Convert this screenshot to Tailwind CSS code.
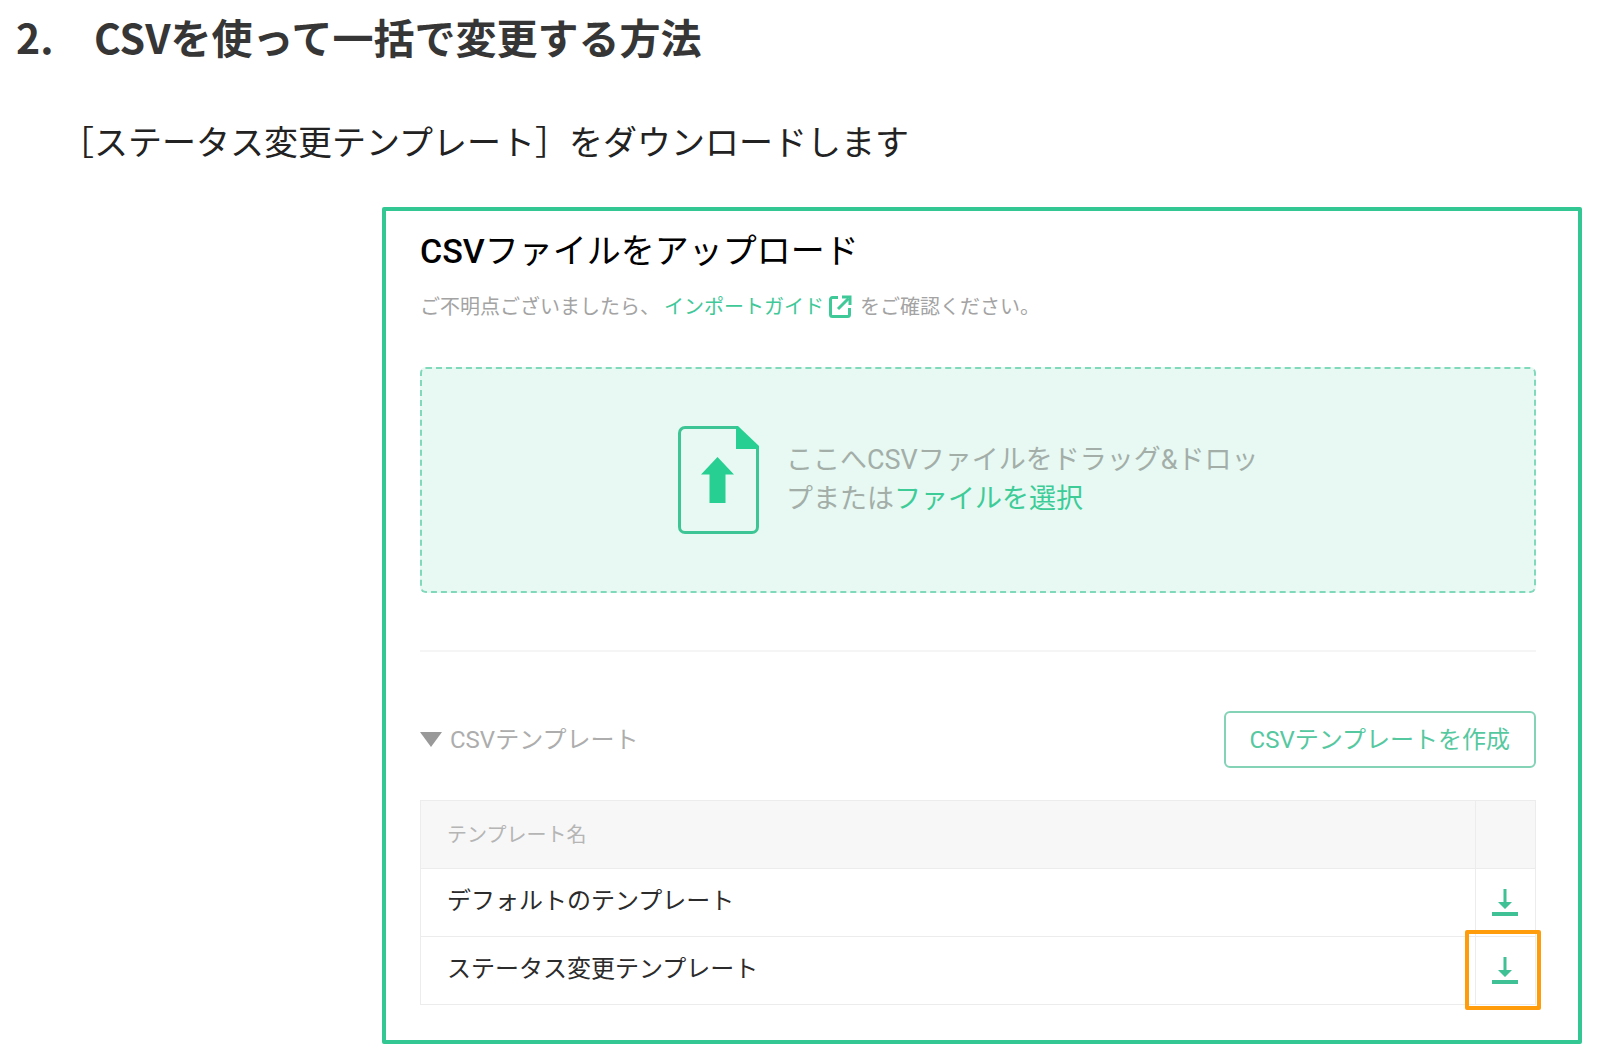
<!DOCTYPE html>
<html lang="ja">
<head>
<meta charset="utf-8">
<meta name="viewport" content="width=device-width, initial-scale=1">
<title>CSVを使って一括で変更する方法</title>
<script src="https://cdn.jsdelivr.net/npm/@tailwindcss/browser@4"></script>
</head>
<body class="bg-white font-['Noto_Sans_CJK_JP',sans-serif] text-[#222]">
<main class="pt-3 pb-4">
  <h1 class="flex pl-4 text-[41px] leading-[48px] font-bold text-[#363636]">
    <span class="w-[78px] shrink-0">2.</span>
    <span>CSVを使って一括で変更する方法</span>
  </h1>
  <p class="mt-[57px] pl-[60px] text-[34px] leading-[48px]">［ステータス変更テンプレート］をダウンロードします</p>

  <section class="mt-[42px] mr-[18px] ml-[382px] rounded-xs border-4 border-[#33c793] pt-4 pr-[42px] pb-[35px] pl-[34px] font-[Roboto,'Noto_Sans_CJK_JP',sans-serif]">
    <h2 class="text-[34px] leading-[48px] text-black"><span class="font-medium">CSV</span>ファイルをアップロード</h2>
    <p class="mt-4 flex items-center text-[20px] leading-[32px] text-[#a3a3a3]">
      <span>ご不明点ございましたら、</span>
      <a href="#guide" class="ml-1 flex items-center gap-1 text-[#3fc898]">インポートガイド
        <svg class="size-6" viewBox="0 0 24 24" fill="none" stroke="currentColor" stroke-width="3" aria-hidden="true">
          <path d="M10 2.500H4.500a2 2 0 0 0-2 2v15a2 2 0 0 0 2 2h15a2 2 0 0 0 2-2V13"/>
          <path d="M10 14 20.500 3.500"/>
          <path d="M14 2H22V10"/>
        </svg>
      </a>
      <span class="ml-2">をご確認ください。</span>
    </p>

    <div class="relative mt-11 flex items-center justify-center gap-[27px] rounded-md border-2 border-dashed border-[#7fd9ba] bg-[#e7f9f2] py-[57px]">
      <svg class="h-[108px] w-[81px] shrink-0" viewBox="0 0 81 108" fill="none" aria-hidden="true">
        <path d="M58 1.500H7A5.500 5.500 0 0 0 1.500 7v94A5.500 5.500 0 0 0 7 106.500h67a5.500 5.500 0 0 0 5.500-5.500V21" stroke="#3ec596" stroke-width="3"/>
        <path d="M58 0h2l21 20v3H58Z" fill="#27cf92"/>
        <path d="M39.500 31 56 48.500h-8.500V77h-16V48.500H23Z" fill="#27cf92"/>
      </svg>
      <p class="w-[492px] text-[27px] leading-[39px] text-[#a3aea9]">ここへCSVファイルをドラッグ&amp;ドロップまたは<label for="csv-file" class="cursor-pointer text-[#3dcc98]">ファイルを選択</label></p>
      <input id="csv-file" type="file" accept=".csv" class="sr-only bottom-0 left-0">
    </div>

    <hr class="mt-[57px] border-t-2 border-[#f5f5f5]">

    <div class="mt-[59px] flex items-center justify-between">
      <button type="button" class="flex items-center gap-2 text-[24px] leading-[36px] text-[#adadad]">
        <svg class="h-[15px] w-[22px]" viewBox="0 0 22 15" aria-hidden="true"><path d="M0 0h22L11 15Z" fill="#999"/></svg>
        CSVテンプレート
      </button>
      <button type="button" class="h-[57px] rounded-md border-2 border-[#84d3b7] px-6 text-[24px] leading-[36px] text-[#55c8a0]">CSVテンプレートを作成</button>
    </div>

    <table class="mt-8 w-full border-collapse text-left">
      <thead class="bg-[#f7f7f7]">
        <tr class="h-[68px]">
          <th scope="col" class="border border-[#ececec] px-[26px] text-[20px] leading-[32px] font-normal text-[#b5b5b5]">テンプレート名</th>
          <td class="w-[60px] border border-[#ececec]"></td>
        </tr>
      </thead>
      <tbody class="text-[24px] leading-[36px] text-[#2b2b2b]">
        <tr class="h-[68px]">
          <td class="border border-[#ececec] px-[26px] pb-1">デフォルトのテンプレート</td>
          <td class="border border-[#ececec] pr-0.5">
            <a href="#default" aria-label="デフォルトのテンプレートをダウンロード" class="flex justify-center text-[#3fc095]">
              <svg class="h-7 w-[26px]" viewBox="0 0 26 28" aria-hidden="true"><path d="M11.500 0h3v13H20l-7 7-7-7h5.500ZM0 23h26v4H0Z" fill="currentColor"/></svg>
            </a>
          </td>
        </tr>
        <tr class="h-[68px]">
          <td class="border border-[#ececec] px-[26px] pb-1">ステータス変更テンプレート</td>
          <td class="relative border border-[#ececec] pr-0.5">
            <a href="#status" aria-label="ステータス変更テンプレートをダウンロード" class="flex justify-center text-[#3fc095]">
              <svg class="h-7 w-[26px]" viewBox="0 0 26 28" aria-hidden="true"><path d="M11.500 0h3v13H20l-7 7-7-7h5.500ZM0 23h26v4H0Z" fill="currentColor"/></svg>
            </a>
            <span class="pointer-events-none absolute -top-[7px] -right-[6px] -bottom-[6px] -left-[11px] rounded-xs border-4 border-[#ff9c0c]"></span>
          </td>
        </tr>
      </tbody>
    </table>
  </section>
</main>
</body>
</html>
